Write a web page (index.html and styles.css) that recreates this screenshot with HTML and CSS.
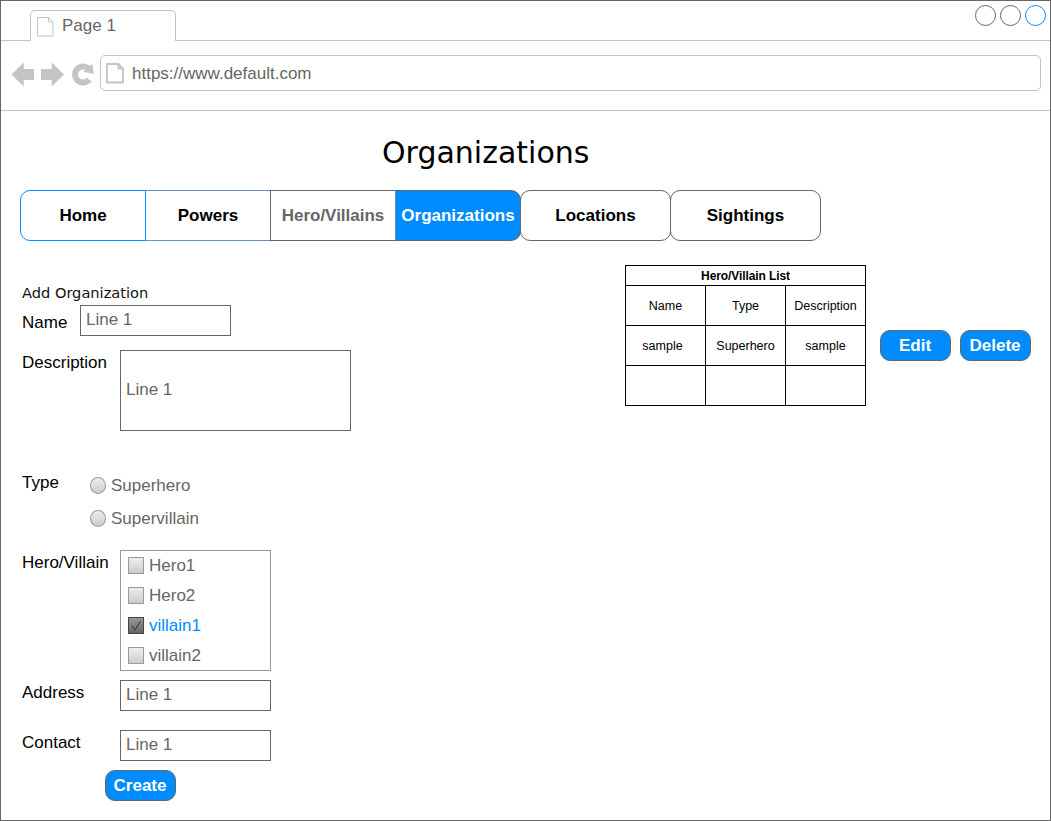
FILE: index.html
```html
<!DOCTYPE html>
<html lang="en">
<head>
<meta charset="utf-8">
<title>Organizations</title>
<link rel="stylesheet" href="styles.css">
</head>
<body>
<div class="window">
  <header class="tabbar">
    <div class="tab">
      <svg class="tab-icon" width="17" height="20" viewBox="0 0 17 20"><path d="M.5.5h11l4.500 4.500v14H.5zM11.500.5V5H16" fill="#fff" stroke="#c4c4c4"/></svg>
      <span>Page 1</span>
    </div>
    <div class="controls"><i class="dot"></i><i class="dot"></i><i class="dot dot-active"></i></div>
  </header>
  <div class="toolbar">
    <svg class="tools" width="84" height="26" viewBox="11 62 84 26">
      <path d="M11.500 74.500 23.700 62.500V69H34V80H23.700V86.500Z" fill="#c4c4c4"/>
      <path d="M64 74.500 51.700 62.500V69H41V80H51.700V86.500Z" fill="#c4c4c4"/>
      <path d="M88.300 68.500A8 8 0 1 0 89.300 79.600" fill="none" stroke="#c4c4c4" stroke-width="6"/>
      <path d="M92.300 63.700 93.800 74 83.300 71.800Z" fill="#c4c4c4"/>
    </svg>
    <div class="address">
      <svg width="18" height="21" viewBox="0 0 18 21"><path d="M1 1h11.500l4.500 4.500v14H1zM12.500 1v4.500H17" fill="#fff" stroke="#c4c4c4" stroke-width="1.800"/></svg>
      <span>https://www.default.com</span>
    </div>
  </div>
  <main class="page">
    <h1>Organizations</h1>
    <nav class="nav">
      <a class="nav-item home">Home</a>
      <a class="nav-item powers">Powers</a>
      <a class="nav-item heroes">Hero/Villains</a>
      <a class="nav-item current">Organizations</a>
      <a class="nav-item pill">Locations</a>
      <a class="nav-item pill">Sightings</a>
    </nav>
    <div class="content">
      <form class="form">
        <h2>Add Organization</h2>
        <div class="row row-name"><label>Name</label><div class="field">Line 1</div></div>
        <div class="row row-desc"><label>Description</label><div class="field area">Line 1</div></div>
        <div class="row row-type"><label>Type</label>
          <div class="radios">
            <div class="choice"><i class="radio"></i>Superhero</div>
            <div class="choice"><i class="radio"></i>Supervillain</div>
          </div>
        </div>
        <div class="row row-members"><label>Hero/Villain</label>
          <div class="checks">
            <div class="choice"><i class="box"></i>Hero1</div>
            <div class="choice"><i class="box"></i>Hero2</div>
            <div class="choice checked"><i class="box"><svg width="14" height="14" viewBox="0 0 14 14"><path d="M3 8 6 12 11.500 3" fill="none" stroke="#333"/></svg></i>villain1</div>
            <div class="choice"><i class="box"></i>villain2</div>
          </div>
        </div>
        <div class="row row-address"><label>Address</label><div class="field">Line 1</div></div>
        <div class="row row-contact"><label>Contact</label><div class="field">Line 1</div></div>
        <div class="btn create">Create</div>
      </form>
      <section class="list">
        <table>
          <thead><tr><th colspan="3">Hero/Villain List</th></tr></thead>
          <tbody>
            <tr><td>Name</td><td>Type</td><td>Description</td></tr>
            <tr><td class="shift">sample</td><td>Superhero</td><td>sample</td></tr>
            <tr><td></td><td></td><td></td></tr>
          </tbody>
        </table>
        <div class="actions"><div class="btn">Edit</div><div class="btn">Delete</div></div>
      </section>
    </div>
  </main>
</div>
</body>
</html>
```
FILE: styles.css
```css
* { box-sizing: border-box; }
body { margin: 0; background: #fff; font: 17px/20px "Liberation Sans", Arial, sans-serif; color: #000; }
svg { display: block; flex: none; }
.window { width: 1051px; height: 821px; border: 1px solid #666; overflow: hidden; }

.tabbar { height: 40px; border-bottom: 1px solid #c4c4c4; display: flex; justify-content: space-between; align-items: flex-start; padding: 0 4px 0 29px; }
.tab { width: 146px; height: 31px; margin-top: 9px; border: 1px solid #c4c4c4; border-bottom: 0; border-radius: 5px 5px 0 0; background: #fff; display: flex; padding: 6px 0 0 6px; color: #666; }
.tab span { margin: -1px 0 0 8px; }
.controls { display: flex; gap: 4px; margin-top: 4px; }
.dot { width: 21px; height: 21px; border: 1px solid #666; border-radius: 50%; }
.dot-active { border-color: #008cff; }

.toolbar { height: 70px; border-bottom: 1px solid #c4c4c4; display: flex; padding: 14px 9px 0 10px; }
.tools { margin-top: 7px; margin-right: 5px; }
.address { flex: 1; height: 36px; border: 1px solid #c4c4c4; border-radius: 5px; display: flex; align-items: center; gap: 8px; padding-left: 5px; color: #666; }
.address span { padding-top: 2px; }

h1 { margin: 0; padding: 22px 0 0 381px; height: 79px; font: 30px/40px "DejaVu Sans", Verdana, sans-serif; }
.nav { display: flex; padding-left: 19px; }
.nav-item { width: 126px; height: 51px; border: 1px solid #666; margin-right: -1px; display: flex; align-items: center; justify-content: center; font-weight: bold; white-space: nowrap; background: #fff; }
.home { border-color: #008cff; border-radius: 10px 0 0 10px; position: relative; }
.powers { border-color: #6c8ebf; }
.heroes { color: #666; }
.current { background: #008cff; color: #fff; border-left-color: #6c8ebf; border-radius: 0 10px 10px 0; }
.pill { width: 151px; border-radius: 10px; background: none; }

.content { display: flex; }
.form { width: 605px; padding-left: 21px; }
h2 { margin: 42px 0 0; height: 22px; font: 14.600px/20px "DejaVu Sans", Verdana, sans-serif; color: #111; }
.row { display: flex; align-items: flex-start; }
.row label { width: 98px; padding-top: 3px; flex: none; }
.field { width: 151px; height: 31px; border: 1px solid #666; color: #666; padding: 0 0 2px 5px; display: flex; align-items: center; }
.area { width: 231px; height: 81px; }
.row-name { height: 45px; }
.row-name label { width: 58px; padding-top: 8px; }
.row-desc { height: 120px; }
.row-type { height: 80px; }
.row-type label { width: 68px; }
.radios { padding-top: 6px; display: grid; gap: 13px; }
.choice { display: flex; align-items: flex-start; color: #666; }
.radio { width: 16px; height: 17px; border: 1px solid #999; border-radius: 50%; background: linear-gradient(#eee, #ccc); margin: 1px 5px 0 0; }
.row-members { height: 130px; }
.checks { width: 151px; height: 121px; border: 1px solid #999; padding: 5px 0 0 7px; display: grid; grid-auto-rows: 20px; gap: 10px; }
.box { width: 16px; height: 17px; border: 1px solid #999; background: linear-gradient(#eee, #ccc); margin: 1px 5px 0 0; }
.checked { color: #008cff; }
.checked .box { border-color: #444; background: linear-gradient(#999, #666); }
.row-address { height: 50px; }
.row-contact { height: 40px; }
.btn { width: 71px; height: 31px; border: 1px solid #666; border-radius: 10px; background: #008cff; color: #fff; font-weight: bold; display: flex; align-items: center; justify-content: center; padding-right: 1px; }
.create { margin-left: 83px; }

.list { display: flex; padding: 24px 0 0 19px; }
table { width: 241px; height: 141px; border-collapse: collapse; table-layout: fixed; font-size: 12px; line-height: 14px; }
th, td { border: 1px solid #000; padding: 0; text-align: center; height: 40px; }
td { font-size: 12.500px; }
th { height: 20px; letter-spacing: -.1px; }
.shift { padding-right: 6px; }
.actions { display: flex; gap: 9px; margin: 65px 0 0 14px; }
```
